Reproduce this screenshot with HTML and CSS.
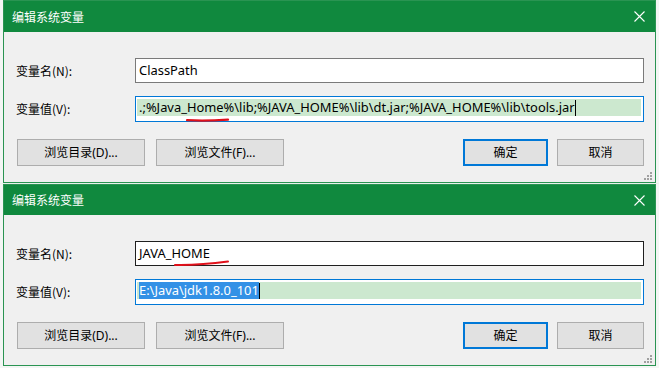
FILE: index.html
```html
<!DOCTYPE html>
<html>
<head>
<meta charset="utf-8">
<link rel="stylesheet" href="styles.css">
</head>
<body>
<div class="screen">
  <div class="dialog d1">
    <div class="titlebar">
      <span class="title">编辑系统变量</span>
      <svg class="close" width="11" height="11" viewBox="0 0 11 11"><path d="M0.5 0.5L10.5 10.5M10.5 0.5L0.5 10.5" stroke="#fff" stroke-width="1.1" fill="none"/></svg>
    </div>
    <div class="body">
      <div class="row">
        <span class="label">变量名(N):</span>
        <div class="field"><span class="val">ClassPath</span></div>
      </div>
      <div class="row tall">
        <span class="label">变量值(V):</span>
        <div class="field focus">
          <div class="hl"><span class="val">.;%Java_Home%\lib;%JAVA_HOME%\lib\dt.jar;%JAVA_HOME%\lib\tools.jar</span><span class="caret"></span></div>
          <svg class="mark m1" width="44" height="6" viewBox="0 0 44 6"><path d="M1 3.2 Q 20 4.2 42 2.6" stroke="#e0101a" stroke-width="2.2" fill="none" stroke-linecap="round"/></svg>
        </div>
      </div>
      <div class="buttons">
        <button class="btn wide">浏览目录(D)...</button>
        <button class="btn wide">浏览文件(F)...</button>
        <span class="spacer"></span>
        <button class="btn default">确定</button>
        <button class="btn narrow">取消</button>
      </div>
      <svg class="grip" width="8" height="8" viewBox="0 0 8 8"><g fill="#a0a0a0"><rect x="6" y="0" width="2" height="2"/><rect x="3" y="3" width="2" height="2"/><rect x="6" y="3" width="2" height="2"/><rect x="0" y="6" width="2" height="2"/><rect x="3" y="6" width="2" height="2"/><rect x="6" y="6" width="2" height="2"/></g></svg>
    </div>
  </div>
  <div class="strip"></div>
  <div class="dialog d2">
    <div class="titlebar">
      <span class="title">编辑系统变量</span>
      <svg class="close" width="11" height="11" viewBox="0 0 11 11"><path d="M0.5 0.5L10.5 10.5M10.5 0.5L0.5 10.5" stroke="#fff" stroke-width="1.1" fill="none"/></svg>
    </div>
    <div class="body">
      <div class="row">
        <span class="label">变量名(N):</span>
        <div class="field hover"><span class="val">JAVA_HOME</span>
          <svg class="mark m2" width="56" height="8" viewBox="0 0 56 8"><path d="M1 6 Q 25 6.5 54 2.6" stroke="#e0101a" stroke-width="2" fill="none" stroke-linecap="round"/></svg>
        </div>
      </div>
      <div class="row tall">
        <span class="label">变量值(V):</span>
        <div class="field focus">
          <div class="hl"><span class="val sel">E:\Java\jdk1.8.0_101</span><span class="caret"></span></div>
        </div>
      </div>
      <div class="buttons">
        <button class="btn wide">浏览目录(D)...</button>
        <button class="btn wide">浏览文件(F)...</button>
        <span class="spacer"></span>
        <button class="btn default">确定</button>
        <button class="btn narrow">取消</button>
      </div>
      <svg class="grip" width="8" height="8" viewBox="0 0 8 8"><g fill="#a0a0a0"><rect x="6" y="0" width="2" height="2"/><rect x="3" y="3" width="2" height="2"/><rect x="6" y="3" width="2" height="2"/><rect x="0" y="6" width="2" height="2"/><rect x="3" y="6" width="2" height="2"/><rect x="6" y="6" width="2" height="2"/></g></svg>
    </div>
  </div>
</div>
</body>
</html>
```
FILE: styles.css
```css
html, body {
  margin: 0;
  padding: 0;
  background: #f3f6f4;
}
body {
  font-family: "Noto Sans", "Noto Sans CJK SC", sans-serif;
  font-size: 12px;
  color: #000;
}
.screen {
  width: 659px;
  height: 368px;
  overflow: hidden;
  display: flex;
  flex-direction: column;
}
.dialog {
  margin-left: 3px;
  width: 651px;
  border: 1px solid #2a9452;
  background: #f0f0f0;
  flex: none;
}
.titlebar {
  height: 30px;
  background: #10893e;
  display: flex;
  align-items: center;
  padding: 0 9px 0 8px;
}
.d1 .titlebar {
  height: 31px;
}
.title {
  color: #fff;
  font-family: "Noto Sans CJK SC", sans-serif;
  font-size: 12px;
  flex: 1;
  line-height: 1;
}
.close {
  display: block;
  margin-right: 1px;
}
.body {
  position: relative;
  padding: 26px 11px 16px 12px;
}
.row {
  display: grid;
  grid-template-columns: 119px 1fr;
  align-items: center;
  height: 25px;
  margin-bottom: 13px;
}
.row.tall {
  height: 26px;
  margin-bottom: 17px;
}
.label {
  font-family: "Noto Sans CJK SC", sans-serif;
  font-size: 12px;
  line-height: 1;
}
.field {
  position: relative;
  height: 100%;
  box-sizing: border-box;
  border: 1px solid #7a7a7a;
  background: #fff;
  display: flex;
  align-items: center;
  padding-left: 3px;
}
.field.hover {
  border-color: #1f1f1f;
}
.field.focus {
  border-color: #0078d7;
  padding: 2px 2px 5px 1px;
  align-items: stretch;
}
.hl {
  flex: 1;
  background: #cce8cf;
  display: flex;
  align-items: center;
  padding-left: 2px;
}
.val {
  font-size: 12.9px;
  line-height: 17px;
  white-space: nowrap;
}
.val.sel {
  background: #3391e6;
  color: #fff;
}
.caret {
  width: 1px;
  height: 16px;
  background: #000;
}
.mark {
  position: absolute;
  display: block;
}
.m1 {
  left: 50px;
  top: 20px;
}
.m2 {
  left: 38px;
  top: 17px;
}
.buttons {
  display: flex;
  align-items: center;
  height: 27px;
}
.btn {
  height: 27px;
  box-sizing: border-box;
  background: #e1e1e1;
  border: 1px solid #adadad;
  font-family: "Noto Sans", "Noto Sans CJK SC", sans-serif;
  font-size: 12px;
  color: #000;
  padding: 0;
  margin: 0;
  line-height: 1;
}
.btn.wide {
  width: 128px;
  margin-left: 1px;
  margin-right: 10px;
}
.btn.default {
  width: 85px;
  border: 2px solid #0078d7;
  margin-right: 9px;
}
.btn.narrow {
  width: 87px;
}
.spacer {
  flex: 1;
}
.grip {
  position: absolute;
  right: 3px;
  bottom: 2px;
}
.strip {
  height: 1px;
  background: #e9f2ec;
  flex: none;
}
```
